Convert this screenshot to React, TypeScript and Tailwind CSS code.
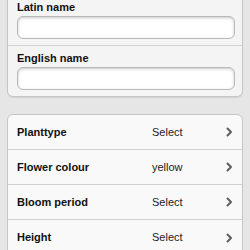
import React from "react";

type Row = { label: string; value: string };

const rows: Row[] = [
  { label: "Planttype", value: "Select" },
  { label: "Flower colour", value: "yellow" },
  { label: "Bloom period", value: "Select" },
  { label: "Height", value: "Select" },
];

function Chevron() {
  return (
    <svg width="7" height="10" viewBox="0 0 7 10" className="shrink-0">
      <path d="M1.5 1.5 L5 5 L1.5 8.5" fill="none" stroke="#5f5f5f" strokeWidth="2" strokeLinecap="round" strokeLinejoin="round" />
    </svg>
  );
}

function Field({ label, last }: { label: string; last?: boolean }) {
  return (
    <div className={`px-[9px] pr-[7px] pt-[6px] pb-[6px] ${last ? "" : "border-b border-[#d2d2d2]"}`}>
      <div className="h-[13px] text-[11px] leading-[13px] font-bold text-[#111]">{label}</div>
      <div className="mt-[2px] h-[23px] rounded-[6px] border border-[#b9b9b9] bg-white shadow-[inset_0_1px_3px_rgba(0,0,0,0.22)]" />
    </div>
  );
}

export default function App() {
  return (
    <div
      className="w-[250px] h-[250px] overflow-hidden bg-[#e6e6e6] px-[7px]"
      style={{ fontFamily: '"Liberation Sans", Helvetica, Arial, sans-serif' }}
    >
      <div className="-mt-[6px] rounded-[6px] border border-[#c6c6c6] bg-[#f4f4f4] shadow-[0_1px_1px_rgba(0,0,0,0.08)]">
        <Field label="Latin name" />
        <Field label="English name" last />
      </div>

      <div className="mt-[17px] rounded-[6px] border border-[#c6c6c6] bg-[#f9f9f9]">
        {rows.map((r, i) => (
          <div
            key={r.label}
            className={`flex h-[35px] items-center pl-[9px] pr-[9px] ${i < rows.length - 1 ? "border-b border-[#d0d0d0]" : ""}`}
          >
            <div className="w-[135px] text-[11px] font-bold text-[#111]">{r.label}</div>
            <div className="flex-1 text-[11px] text-[#222]">{r.value}</div>
            <Chevron />
          </div>
        ))}
      </div>
    </div>
  );
}
